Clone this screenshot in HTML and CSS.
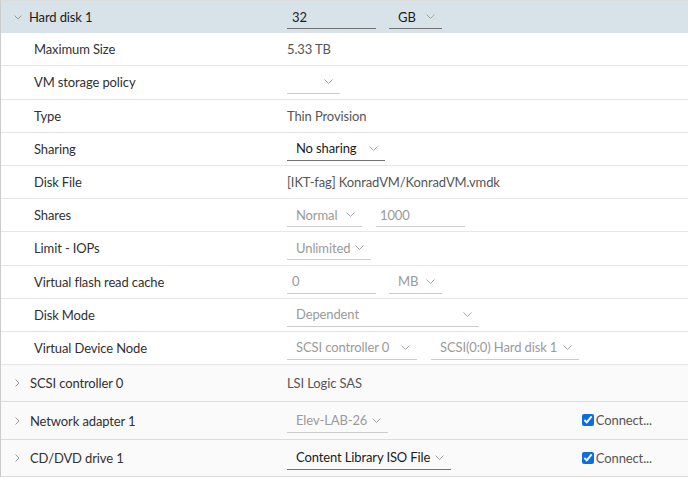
FILE: index.html
```html
<!DOCTYPE html>
<html>
<head>
<meta charset="utf-8">
<link rel="stylesheet" href="styles.css">
</head>
<body>
<div class="panel">
  <div class="row head">
    <div class="label"><svg class="caret" width="8" height="5" viewBox="0 0 8 5"><path d="M0.5 0.5L4 4L7.5 0.5"/></svg>Hard disk 1</div>
    <div class="value">
      <span class="input w89">32</span>
      <span class="select w53 gap13"><span class="opt">GB</span><svg class="chev" width="9" height="5" viewBox="0 0 9 5"><path d="M0.5 0.5L4.5 4.5L8.5 0.5"/></svg></span>
    </div>
  </div>
  <div class="row sub">
    <div class="label">Maximum Size</div>
    <div class="value"><span class="text">5.33 TB</span></div>
  </div>
  <div class="row sub">
    <div class="label">VM storage policy</div>
    <div class="value"><span class="select w53 dis"><span class="opt"></span><svg class="chev" width="9" height="5" viewBox="0 0 9 5"><path d="M0.5 0.5L4.5 4.5L8.5 0.5"/></svg></span></div>
  </div>
  <div class="row sub">
    <div class="label">Type</div>
    <div class="value"><span class="text">Thin Provision</span></div>
  </div>
  <div class="row sub">
    <div class="label">Sharing</div>
    <div class="value"><span class="select w98"><span class="opt">No sharing</span><svg class="chev" width="9" height="5" viewBox="0 0 9 5"><path d="M0.5 0.5L4.5 4.5L8.5 0.5"/></svg></span></div>
  </div>
  <div class="row sub">
    <div class="label">Disk File</div>
    <div class="value"><span class="text">[IKT-fag] KonradVM/KonradVM.vmdk</span></div>
  </div>
  <div class="row sub">
    <div class="label">Shares</div>
    <div class="value">
      <span class="select w75 dis"><span class="opt">Normal</span><svg class="chev" width="9" height="5" viewBox="0 0 9 5"><path d="M0.5 0.5L4.5 4.5L8.5 0.5"/></svg></span>
      <span class="input w89 dis gap14 pad4">1000</span>
    </div>
  </div>
  <div class="row sub">
    <div class="label">Limit - IOPs</div>
    <div class="value"><span class="select w84 dis"><span class="opt">Unlimited</span><svg class="chev" width="9" height="5" viewBox="0 0 9 5"><path d="M0.5 0.5L4.5 4.5L8.5 0.5"/></svg></span></div>
  </div>
  <div class="row sub">
    <div class="label">Virtual flash read cache</div>
    <div class="value">
      <span class="input w89 dis">0</span>
      <span class="select w53 dis gap13"><span class="opt">MB</span><svg class="chev" width="9" height="5" viewBox="0 0 9 5"><path d="M0.5 0.5L4.5 4.5L8.5 0.5"/></svg></span>
    </div>
  </div>
  <div class="row sub">
    <div class="label">Disk Mode</div>
    <div class="value"><span class="select w192 dis"><span class="opt">Dependent</span><svg class="chev" width="9" height="5" viewBox="0 0 9 5"><path d="M0.5 0.5L4.5 4.5L8.5 0.5"/></svg></span></div>
  </div>
  <div class="row sub">
    <div class="label">Virtual Device Node</div>
    <div class="value">
      <span class="select w130 dis"><span class="opt">SCSI controller 0</span><svg class="chev" width="9" height="5" viewBox="0 0 9 5"><path d="M0.5 0.5L4.5 4.5L8.5 0.5"/></svg></span>
      <span class="select w148 dis gap14"><span class="opt">SCSI(0:0) Hard disk 1</span><svg class="chev" width="9" height="5" viewBox="0 0 9 5"><path d="M0.5 0.5L4.5 4.5L8.5 0.5"/></svg></span>
    </div>
  </div>
  <div class="row group">
    <div class="label"><svg class="caret" width="5" height="8" viewBox="0 0 5 8"><path d="M0.5 0.5L4 4L0.5 7.5"/></svg>SCSI controller 0</div>
    <div class="value"><span class="text">LSI Logic SAS</span></div>
  </div>
  <div class="row group">
    <div class="label"><svg class="caret" width="5" height="8" viewBox="0 0 5 8"><path d="M0.5 0.5L4 4L0.5 7.5"/></svg>Network adapter 1</div>
    <div class="value">
      <span class="select w101 dis"><span class="opt">Elev-LAB-26</span><svg class="chev" width="9" height="5" viewBox="0 0 9 5"><path d="M0.5 0.5L4.5 4.5L8.5 0.5"/></svg></span>
      <label class="connect"><input type="checkbox" checked>Connect...</label>
    </div>
  </div>
  <div class="row group">
    <div class="label"><svg class="caret" width="5" height="8" viewBox="0 0 5 8"><path d="M0.5 0.5L4 4L0.5 7.5"/></svg>CD/DVD drive 1</div>
    <div class="value">
      <span class="select w164"><span class="opt">Content Library ISO File</span><svg class="chev" width="9" height="5" viewBox="0 0 9 5"><path d="M0.5 0.5L4.5 4.5L8.5 0.5"/></svg></span>
      <label class="connect"><input type="checkbox" checked>Connect...</label>
    </div>
  </div>
</div>
</body>
</html>
```

FILE: styles.css
```css
html, body {
  margin: 0;
  padding: 0;
  background: #ffffff;
}
body {
  font-family: Lato, "Open Sans", sans-serif;
  font-size: 13px;
  letter-spacing: -0.12px;
  color: #313131;
}
.panel {
  border-left: 1px solid #cccccc;
  border-top: 1px solid #dddddd;
  width: 687px;
}
.row {
  display: grid;
  grid-template-columns: 286px 1fr;
  align-items: center;
  box-sizing: border-box;
  border-bottom: 1px solid #e6e6e6;
}
.row.head {
  height: 32.2px;
  background: #d8e3e9;
  border-bottom: none;
}
.row.sub {
  height: 33.2px;
}
.row.group {
  height: 37.33px;
  background: #fafafa;
  border-bottom: 1px solid #dcdcdc;
}
.label {
  display: flex;
  align-items: center;
  white-space: nowrap;
}
.head .label {
  padding-left: 13px;
  color: #1b1b1b;
}
.head .caret {
  margin-right: 7px;
}
.sub .label {
  padding-left: 33px;
}
.group .label {
  padding-left: 14px;
}
.group .caret {
  margin-right: 10px;
}
.caret path {
  fill: none;
  stroke: #9a9a9a;
  stroke-width: 1;
}
.value {
  display: flex;
  align-items: center;
  height: 100%;
}
.text {
  color: #565656;
}
.input, .select {
  box-sizing: border-box;
  height: 24px;
  display: inline-flex;
  align-items: center;
  border-bottom: 1px solid #737373;
  color: #1b1b1b;
  white-space: nowrap;
}
.input {
  padding-left: 5px;
}
.input.pad4 {
  padding-left: 4px;
}
.select {
  padding-left: 9px;
  padding-right: 7px;
}
.opt {
  flex: 1 1 auto;
  min-width: 0;
  overflow: hidden;
  margin-right: 4px;
}
.chev {
  flex: 0 0 auto;
}
.dis {
  color: #9a9a9a;
  border-bottom-color: #cccccc;
}
.chev path {
  fill: none;
  stroke: #a6a6a6;
  stroke-width: 1;
}
.w53 { width: 53px; }
.w75 { width: 75px; }
.w84 { width: 84px; }
.w89 { width: 89px; }
.w98 { width: 98px; }
.w101 { width: 101px; }
.w130 { width: 130px; }
.w148 { width: 148px; }
.w164 { width: 164px; }
.w192 { width: 192px; }
.gap13 { margin-left: 13px; }
.gap14 { margin-left: 14px; }
.connect {
  margin-left: auto;
  margin-right: 36px;
  display: inline-flex;
  align-items: center;
  color: #565656;
  align-self: flex-start;
  margin-top: 10px;
}
.connect input {
  margin: 0 2px 0 0;
  width: 12px;
  height: 12px;
  accent-color: #0a6ee0;
}
```
